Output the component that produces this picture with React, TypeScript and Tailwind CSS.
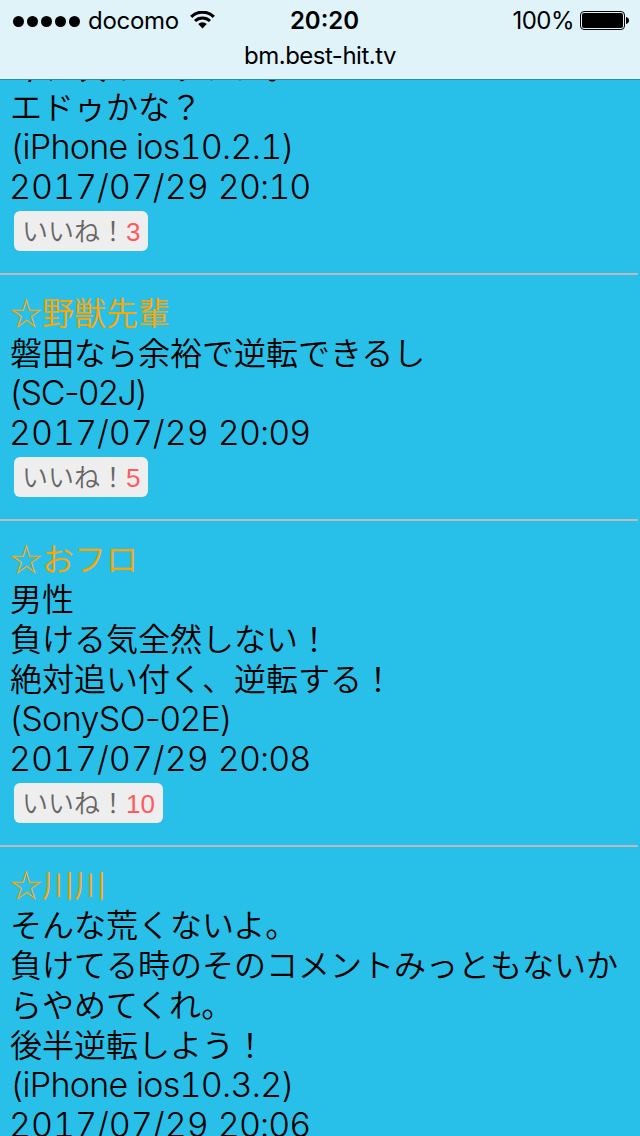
type Post = {
  name?: string;
  lines: string[];
  device: string;
  deviceClass: string;
  date: string;
  time: string;
  likes?: number;
};

const posts: Post[] = [
  {
    lines: ["今、次のトップは。", "エドゥかな？"],
    device: "(iPhone ios10.2.1)",
    deviceClass: "tabular-nums tracking-[-0.7px]",
    date: "2017/07/29",
    time: "20:10",
    likes: 3,
  },
  {
    name: "☆野獣先輩",
    lines: ["磐田なら余裕で逆転できるし"],
    device: "(SC-02J)",
    deviceClass: "tracking-[-1.3px]",
    date: "2017/07/29",
    time: "20:09",
    likes: 5,
  },
  {
    name: "☆おフロ",
    lines: ["男性", "負ける気全然しない！", "絶対追い付く、逆転する！"],
    device: "(SonySO-02E)",
    deviceClass: "tracking-[-0.6px]",
    date: "2017/07/29",
    time: "20:08",
    likes: 10,
  },
  {
    name: "☆川川",
    lines: [
      "そんな荒くないよ。",
      "負けてる時のそのコメントみっともないからやめてくれ。",
      "後半逆転しよう！",
    ],
    device: "(iPhone ios10.3.2)",
    deviceClass: "tabular-nums tracking-[-0.7px]",
    date: "2017/07/29",
    time: "20:06",
  },
];

const StatusBar = () => (
  <header className="relative z-10 h-20 shrink-0 border-b border-[#2c8ba6] bg-[#dff3f9] font-['Inter',sans-serif] text-black">
    <div className="grid h-[42px] grid-cols-[1fr_auto_1fr] items-center pl-[13px] pr-[11px] text-[24px]">
      <div className="flex items-center">
        <div className="flex gap-[3px]">
          {[0, 1, 2, 3, 4].map((dot) => (
            <span key={dot} className="size-[11px] rounded-full bg-black" />
          ))}
        </div>
        <span className="ml-2 tracking-[-0.3px]">docomo</span>
        <svg className="ml-[11px] shrink-0 -translate-y-px" width="25" height="18" viewBox="0 0 25 18" fill="none">
          <path d="M1.2 5.8a16.2 16.2 0 0 1 22.6 0" stroke="#000" strokeWidth="3.2" />
          <path d="M5 10a10.8 10.8 0 0 1 15 0" stroke="#000" strokeWidth="3" />
          <path d="M12.5 17.5 8.2 13.1a6.2 6.2 0 0 1 8.6 0Z" fill="#000" />
        </svg>
      </div>
      <span className="ml-[7px] text-center font-semibold">20:20</span>
      <div className="flex items-center justify-end gap-[6px]">
        <span className="tracking-[-0.5px]">100%</span>
        <svg className="-translate-y-px shrink-0" width="49" height="19" viewBox="0 0 49 19">
          <rect x="0.5" y="0.5" width="44" height="18" rx="3.5" fill="none" stroke="#000" />
          <rect x="2" y="2" width="41" height="15" rx="2" />
          <path d="M46 6c4 .5 4 6.500 0 7Z" />
        </svg>
      </div>
    </div>
    <p className="text-center text-[24px] leading-[27px] tracking-[-0.5px]">bm.best-hit.tv</p>
  </header>
);

const LikeButton = ({ count }: { count: number }) => (
  <button className="ml-1 mt-1 flex h-10 items-center rounded-md bg-[#eee] pl-[8px] pr-[8px] text-[26px] leading-10 text-[#666]">
    <span className="-translate-y-px">いいね！</span>
    <span className="translate-y-px font-['Liberation_Sans',sans-serif] font-normal text-[#ff5a5f]">{count}</span>
  </button>
);

const PostItem = ({ post }: { post: Post }) => (
  <article className="mr-[2px] border-b-2 border-[#bbb] pb-[22px] pl-[10px] pr-2 pt-[18px]">
    {post.name && <h2 className="-translate-y-[2px] text-[#ffa500]">{post.name}</h2>}
    {post.lines.map((line) => (
      <p key={line} className="-translate-y-[2px]">
        {line}
      </p>
    ))}
    <div className="font-['Inter',sans-serif] text-[34px] font-[350]">
      <p className={post.deviceClass}>{post.device}</p>
      <p className="-ml-px tabular-nums">
        {post.date} <span className="tracking-[-0.9px]">{post.time}</span>
      </p>
    </div>
    {post.likes && <LikeButton count={post.likes} />}
  </article>
);

export default function App() {
  return (
    <div className="flex h-[1136px] w-[640px] flex-col overflow-hidden bg-[#28bfe8]">
      <StatusBar />
      <main
        lang="ja"
        className="-mt-[51px] font-['Noto_Sans_CJK_JP',sans-serif] text-[32px] font-[350] leading-10 text-black"
      >
        {posts.map((post) => (
          <PostItem key={post.time} post={post} />
        ))}
      </main>
    </div>
  );
}
